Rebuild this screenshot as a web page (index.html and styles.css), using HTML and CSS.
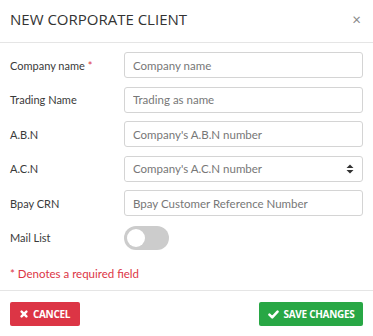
FILE: index.html
```html
<!DOCTYPE html>
<html lang="en">
<head>
    <meta charset="UTF-8">
    <title>New corporate client</title>
    <link rel="stylesheet" href="styles.css">
</head>
<body>
    <div class="modal">
        <div class="modal-header">
            <h4>NEW CORPORATE CLIENT</h4>
            <span class="close">&times;</span>
        </div>
        <div class="modal-body">
            <div class="row">
                <label>Company name <span class="req">*</span></label>
                <input type="text" placeholder="Company name">
            </div>
            <div class="row">
                <label>Trading Name</label>
                <input type="text" placeholder="Trading as name">
            </div>
            <div class="row">
                <label>A.B.N</label>
                <input type="text" placeholder="Company's A.B.N number">
            </div>
            <div class="row">
                <label>A.C.N</label>
                <div class="number">
                    <input type="text" placeholder="Company's A.C.N number">
                    <svg class="spin" width="8" height="10" viewBox="0 0 8 10"><path d="M4 0.5L7.5 4H0.5Z M4 9.5L7.5 6H0.5Z" fill="#333"/></svg>
                </div>
            </div>
            <div class="row">
                <label>Bpay CRN</label>
                <input type="text" placeholder="Bpay Customer Reference Number">
            </div>
            <div class="row">
                <label>Mail List</label>
                <span class="toggle"><span class="knob"></span></span>
            </div>
            <p class="note">* Denotes a required field</p>
        </div>
        <div class="modal-footer">
            <button class="btn cancel">
                <svg width="8" height="8" viewBox="0 0 10 10"><path d="M2 2L8 8M8 2L2 8" stroke="#fff" stroke-width="3" stroke-linecap="round"/></svg>
                CANCEL
            </button>
            <button class="btn save">
                <svg width="11" height="9" viewBox="0 0 12 10"><path d="M1.5 5.2L4.6 8.2L10.5 1.8" stroke="#fff" stroke-width="2.8" fill="none" stroke-linecap="round" stroke-linejoin="round"/></svg>
                SAVE CHANGES
            </button>
        </div>
    </div>
</body>
</html>
```

FILE: styles.css
```css
body {
    margin: 0;
    font-family: Lato, "Open Sans", Arial, sans-serif;
    background: #fff;
    color: #333;
}
.modal {
    width: 373px;
    height: 336px;
    display: flex;
    flex-direction: column;
}
.modal-header {
    height: 43px;
    border-bottom: 1px solid #e5e5e5;
    display: flex;
    align-items: center;
    justify-content: space-between;
    padding: 0 12px 4px 10px;
    box-sizing: border-box;
}
.modal-header h4 {
    margin: 0;
    font-family: "Open Sans", Arial, sans-serif;
    font-size: 15px;
    font-weight: normal;
    color: #333;
}
.close {
    color: #888;
    font-size: 15px;
}
.modal-body {
    padding: 9px 10px 0 10px;
    flex: 1;
}
.row {
    display: flex;
    align-items: center;
    height: 26px;
    margin-bottom: 8.5px;
}
.row label {
    width: 114px;
    font-size: 11px;
    color: #3a3a3a;
}
.req {
    color: #dc3545;
}
.row input, .number {
    flex: 1;
    height: 26px;
    box-sizing: border-box;
    border: 1px solid #d4d4d4;
    border-radius: 3px;
    padding: 0 8px;
    font-family: inherit;
    font-size: 11.5px;
    color: #333;
}
.row input::placeholder {
    color: #777;
}
.number {
    display: flex;
    align-items: center;
    padding: 0;
}
.number input {
    border: none;
    height: 24px;
    min-width: 0;
}
.spin {
    margin-right: 8px;
}
.toggle {
    width: 45px;
    height: 24px;
    border-radius: 12px;
    background: #ccc;
    display: flex;
    align-items: center;
    padding-left: 3px;
    box-sizing: border-box;
}
.knob {
    width: 18px;
    height: 18px;
    border-radius: 50%;
    background: #fff;
}
.note {
    margin: 16px 0 0 0;
    color: #dc3545;
    font-size: 11.5px;
}
.modal-footer {
    height: 46px;
    border-top: 1px solid #e5e5e5;
    display: flex;
    justify-content: space-between;
    align-items: flex-start;
    padding: 11px 10px 0 10px;
    box-sizing: border-box;
}
.btn {
    height: 24px;
    border: none;
    border-radius: 2px;
    color: #fff;
    font-family: "Open Sans", Arial, sans-serif;
    font-weight: bold;
    font-size: 10px;
    letter-spacing: -0.3px;
    white-space: nowrap;
    display: flex;
    align-items: center;
    justify-content: center;
    gap: 5px;
    padding: 0 8px;
}
.cancel {
    background: #dc3545;
    width: 70px;
}
.save {
    background: #28a745;
    width: 104px;
}
```
